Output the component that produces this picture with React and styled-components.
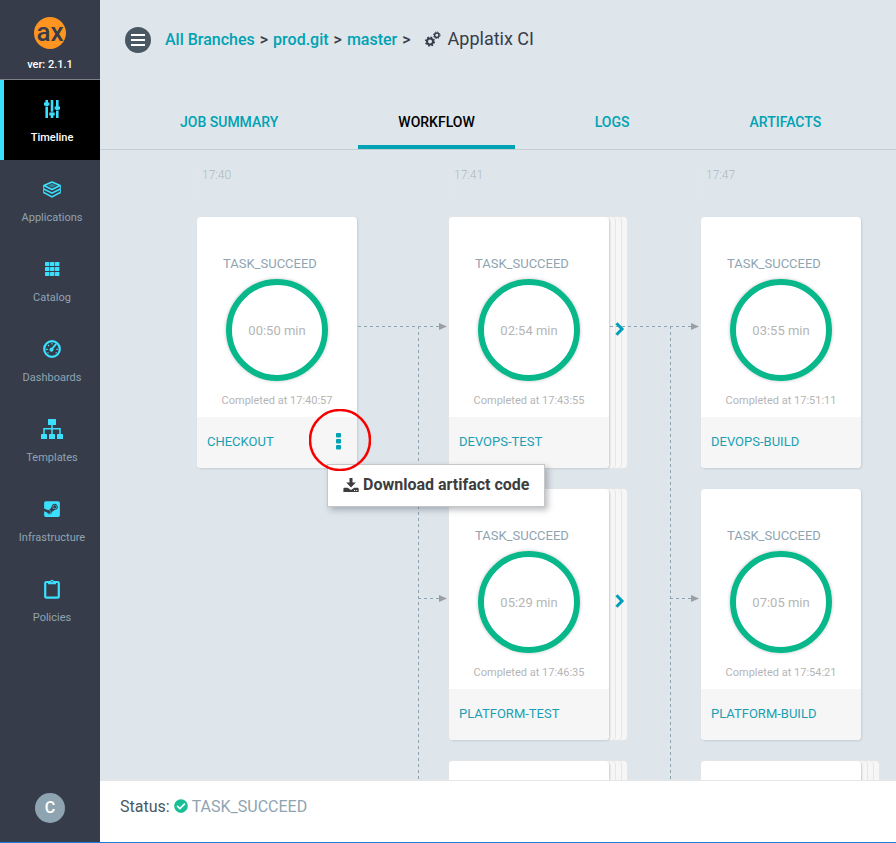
import React from "react";
import styled, { createGlobalStyle, css } from "styled-components";
import { FaCheckCircle, FaSteamSquare } from "react-icons/fa";

const teal = "#00a2b3";
const slate = "#8fa4b1";
const cyan = "#3be0ff";

const GlobalStyle = createGlobalStyle`
  * { box-sizing: border-box; }
  body {
    margin: 0;
    font-family: Roboto, "Liberation Sans", sans-serif;
    font-size: 16px;
    color: #495763;
  }
  button { font: inherit; border: 0; padding: 0; background: none; cursor: pointer; }
  a { text-decoration: none; }
  svg { display: block; }
`;

const Shell = styled.div`
  display: grid;
  grid-template-columns: 100px minmax(0, 1fr);
  height: 100vh;
  border-bottom: 1px solid #1c7ed6;
  background: #dee5eb;
`;

const Sidebar = styled.nav`
  display: flex;
  flex-direction: column;
  background: #363c4a;
`;

const Brand = styled.div`
  display: flex;
  flex-direction: column;
  align-items: center;
  gap: 8px;
  height: 80px;
  padding-top: 17px;
  border-bottom: 1px solid #7d8087;
  color: #fff;
  font-size: 11px;
  font-weight: 500;
  line-height: 16px;
`;

const NavItem = styled.a`
  display: flex;
  flex-direction: column;
  align-items: center;
  gap: 10px;
  height: 80px;
  padding-top: 19px;
  border-left: 4px solid ${(p) => (p.$active ? cyan : "transparent")};
  background: ${(p) => (p.$active ? "#000" : "transparent")};
  color: ${(p) => (p.$active ? "#fff" : slate)};
  font-size: 11px;
  font-weight: ${(p) => (p.$active ? 500 : 400)};
  line-height: 18px;
`;

const NavIcon = styled.span`
  display: flex;
  align-items: center;
  height: 20px;
  color: ${cyan};
`;

const Avatar = styled.button`
  width: 30px;
  height: 30px;
  margin: auto auto 19px;
  border-radius: 50%;
  background: ${slate};
  color: #fff;
  font-size: 16px;
  font-weight: 500;
  line-height: 28px;
`;

const Main = styled.main`
  display: flex;
  flex-direction: column;
  min-width: 0;
  min-height: 0;
`;

const Header = styled.header`
  display: flex;
  align-items: center;
  gap: 14px;
  height: 80px;
  padding-left: 25px;
`;

const MenuButton = styled.button`
  display: grid;
  place-items: center;
  width: 26px;
  height: 26px;
  border-radius: 50%;
  background: #495763;
`;

const Breadcrumb = styled.nav`
  display: flex;
  gap: 5px;
  color: #363c4a;
  font-weight: 500;
  line-height: 20px;
`;

const Crumb = styled.a`
  color: ${teal};
`;

const PageTitle = styled.h1`
  display: flex;
  align-items: center;
  gap: 7px;
  margin: 0;
  padding-bottom: 2px;
  color: #363c4a;
  font-size: 18px;
  font-weight: 400;
  line-height: 20px;
`;

const Tabs = styled.div`
  display: flex;
  gap: 40px;
  height: 70px;
  padding: 18px 40px 0;
  border-bottom: 1px solid #c5cdd4;
`;

const Tab = styled.button`
  flex: none;
  padding: 0 40px;
  border-bottom: 4px solid ${(p) => (p.$active ? teal : "transparent")};
  color: ${(p) => (p.$active ? "#000" : teal)};
  font-size: 14px;
  font-weight: 500;
  line-height: 20px;
  white-space: nowrap;
`;

const Board = styled.section`
  position: relative;
  display: flex;
  gap: 92px;
  flex: 1;
  min-height: 0;
  padding: 15px 0 0 97px;
  overflow: hidden;
`;

const Column = styled.div`
  display: flex;
  flex: none;
  flex-direction: column;
  width: 160px;
`;

const Time = styled.time`
  flex: none;
  height: 41px;
  margin-bottom: 11px;
  padding-left: 4px;
  border-left: 1px solid #e4e6e8;
  color: #adb9c2;
  font-size: 12px;
  font-weight: 300;
  line-height: 20px;
`;

const StepSlot = styled.div`
  position: relative;
  flex: none;
  height: 251px;
  margin-bottom: 21px;
`;

const stackSheet = css`
  position: absolute;
  top: 0;
  bottom: 0;
  left: 0;
  background: #f6f6f6;
  border-radius: 4px;
  box-shadow: 0 0 0 1px #e4e6e8;
`;

const Sheet = styled.div`
  ${stackSheet}
  right: ${(p) => -6 * p.$depth}px;
`;

const Card = styled.article`
  position: relative;
  display: flex;
  flex-direction: column;
  height: 100%;
  padding-top: 37px;
  border-radius: 4px;
  background: #fff;
  box-shadow: 1px 1px 2px #c3cdd5;
  overflow: hidden;
`;

const State = styled.div`
  padding-left: 26px;
  color: ${slate};
  font-size: 13px;
  line-height: 20px;
`;

const Ring = styled.div`
  display: grid;
  place-items: center;
  flex: none;
  width: 102px;
  height: 102px;
  margin: 5px auto 10px;
  border: 6px solid #08b78a;
  border-radius: 50%;
  box-shadow: 0 0 3px 1px #dcdcdc;
  color: #b5b5b5;
  font-size: 13px;
`;

const Completed = styled.div`
  color: #b5b5b5;
  font-size: 11px;
  line-height: 20px;
  text-align: center;
`;

const CardFooter = styled.footer`
  display: flex;
  align-items: center;
  justify-content: space-between;
  height: 51px;
  margin-top: auto;
  padding: 0 16px 2px 10px;
  background: #f6f6f6;
`;

const StepLink = styled.a`
  color: #1a9fb4;
  font-size: 13px;
`;

const KebabButton = styled.button`
  color: ${teal};
`;

const ExpandButton = styled.button`
  position: absolute;
  right: -17px;
  top: 104px;
  z-index: 3;
`;

const Links = styled.svg`
  position: absolute;
  left: 0;
  top: 0;
  pointer-events: none;
`;

const ActionMenu = styled.div`
  position: absolute;
  left: 130px;
  top: 247px;
  z-index: 4;
  padding: 10px 15px 11px;
  border: 1px solid #c6c6c6;
  background: #fff;
  box-shadow: 3px 3px 6px rgba(60, 70, 80, 0.35);
`;

const ActionItem = styled.button`
  display: flex;
  align-items: center;
  gap: 4px;
  color: #3d3d3d;
  font-weight: 700;
  line-height: 20px;
  white-space: nowrap;
`;

const Highlight = styled.svg`
  position: absolute;
  left: 112px;
  top: 192px;
  z-index: 5;
  pointer-events: none;
`;

const StatusBar = styled.footer`
  display: flex;
  align-items: flex-start;
  gap: 4px;
  height: 62px;
  padding: 15px 20px;
  border-top: 1px solid #e4e6e8;
  background: #fff;
  line-height: 22px;
`;

const StatusIcon = styled.span`
  padding-top: 3px;
  color: #18be94;
`;

const StatusValue = styled.span`
  color: ${slate};
`;

const Logo = () => (
  <svg width="32" height="32" viewBox="0 0 32 32" role="img" aria-label="ax">
    <circle cx="16" cy="16" r="16" fill="#ff9420" />
    <text x="16" y="24" textAnchor="middle" fontFamily="Roboto, sans-serif" fontSize="26" fontWeight="500" fill="#363c4a">ax</text>
  </svg>
);

const SlidersIcon = () => (
  <svg width="16" height="18" viewBox="0 0 16 18" fill="none" stroke="currentColor">
    <path d="M2.700 0v18M8 0v18M13.300 0v18" strokeWidth="2.600" />
    <path d="M0 4h5.400M5.300 14h5.400M10.600 8H16" strokeWidth="3" />
    <path d="M2.700 6v1M8 11.500v1M13.300 10v1" stroke="#000" strokeWidth="2.600" opacity=".6" />
  </svg>
);

const LayersIcon = () => (
  <svg width="18" height="17" viewBox="0 0 18 17">
    <path d="M9 1 17 4.500 9 8.500 1 4.500Z" fill="none" stroke="currentColor" strokeWidth="1.700" strokeLinejoin="round" />
    <path d="M5 4.500 9 2.800l4 1.700-4 2Z" fill="currentColor" opacity="0.45" />
    <path d="M1 7.200 9 11.300l8-4.100v1.700L9 13 1 8.900ZM1 10.800 9 14.900l8-4.100v1.600L9 16.800l-8-4.400Z" fill="currentColor" />
    <path d="M.7 4.500v8M17.300 4.500v8" stroke="currentColor" />
  </svg>
);

const GridIcon = () => (
  <svg width="15" height="14" viewBox="0 0 15 14" fill="currentColor">
    {[0, 5, 10].map((y) => [0, 5, 10].map((x) => <rect key={`${x}-${y}`} x={x} y={y} width="4.4" height="4" rx=".4" />))}
  </svg>
);

const GaugeIcon = () => (
  <svg width="18" height="18" viewBox="0 0 18 18" fill="none" stroke="currentColor">
    <circle cx="9" cy="9" r="7.800" strokeWidth="2.200" />
    <path d="m8.600 9.400 4.200-5" strokeWidth="1.800" strokeLinecap="round" />
    <circle cx="8.500" cy="9.700" r="1.600" fill="currentColor" />
    <path d="M9 3v1.600M5 5l1.100 1.100M3 9.400h1.800M13.400 9.400H15M5.500 13l-1-.5M12.700 13l1-.5" strokeWidth="1.100" />
  </svg>
);

const SitemapIcon = () => (
  <svg width="22" height="20" viewBox="0 0 22 20" fill="currentColor">
    <rect x="7" y="0" width="8" height="6" rx=".5" />
    <rect x="0" y="15" width="6" height="5" rx=".5" />
    <rect x="8" y="15" width="6" height="5" rx=".5" />
    <rect x="16" y="15" width="6" height="5" rx=".5" />
    <path d="M3 15v-5.300h16V15M11 6v9" fill="none" stroke="currentColor" strokeWidth="1.500" />
  </svg>
);

const ClipboardIcon = () => (
  <svg width="16" height="20" viewBox="0 0 16 20" fill="none" stroke="currentColor">
    <rect x="1.200" y="3" width="13.600" height="15.600" rx="1.200" strokeWidth="2.200" />
    <path d="M4 5.200V2.600h2.200a1.800 1.800 0 0 1 3.600 0H12v2.600Z" fill="currentColor" stroke="none" />
    <circle cx="8" cy="2.700" r=".7" fill="#363c4a" stroke="none" />
  </svg>
);

const GearsIcon = () => (
  <svg width="16" height="16" viewBox="0 0 16 16" fill="none" stroke="currentColor">
    <circle cx="5" cy="10.500" r="3" strokeWidth="2" />
    <circle cx="5" cy="10.500" r="4.400" strokeWidth="1.400" strokeDasharray="1.730 1.726" />
    <circle cx="11.800" cy="4.200" r="2.200" strokeWidth="1.500" />
    <circle cx="11.800" cy="4.200" r="3.300" strokeWidth="1" strokeDasharray="1.300 1.292" />
  </svg>
);

const BarsIcon = () => (
  <svg width="14" height="12" viewBox="0 0 14 12" fill="#fff">
    <path d="M0 0h14v2H0zM0 5h14v2H0zM0 10h14v2H0z" />
  </svg>
);

const KebabIcon = () => (
  <svg width="5" height="17" viewBox="0 0 5 17" fill="currentColor">
    <rect width="5" height="4.400" rx="1" />
    <rect y="6" width="5" height="4.400" rx="1" />
    <rect y="12" width="5" height="4.400" rx="1" />
  </svg>
);

const ChevronIcon = () => (
  <svg width="13" height="16" viewBox="0 0 13 16" fill="none" stroke="#009fb8" strokeWidth="3">
    <path d="m3.500 2.200 5.500 5.800-5.500 5.800" />
  </svg>
);

const DownloadIcon = () => (
  <svg width="16" height="15" viewBox="0 0 16 15" fill="currentColor">
    <path d="M6.500 0h3v4.500h3.300L8 9.500l-4.800-5h3.300z" />
    <path fillRule="evenodd" d="M1.200 9.700h3.500L8 12l3.300-2.300h3.500l.9.900v3.300H.4v-3.300ZM11 12v.9h1V12Zm2.200 0v.9h1V12Z" />
  </svg>
);

const navItems = [
  { label: "Timeline", icon: <SlidersIcon />, active: true },
  { label: "Applications", icon: <LayersIcon /> },
  { label: "Catalog", icon: <GridIcon /> },
  { label: "Dashboards", icon: <GaugeIcon /> },
  { label: "Templates", icon: <SitemapIcon /> },
  { label: "Infrastructure", icon: <FaSteamSquare size={18} /> },
  { label: "Policies", icon: <ClipboardIcon /> },
];

const tabs = ["JOB SUMMARY", "WORKFLOW", "LOGS", "ARTIFACTS"];

const columns = [
  {
    time: "17:40",
    steps: [{ name: "CHECKOUT", duration: "00:50 min", done: "17:40:57", menu: true }],
  },
  {
    time: "17:41",
    steps: [
      { name: "DEVOPS-TEST", duration: "02:54 min", done: "17:43:55", stacked: true },
      { name: "PLATFORM-TEST", duration: "05:29 min", done: "17:46:35", stacked: true },
      { stacked: true },
    ],
  },
  {
    time: "17:47",
    steps: [
      { name: "DEVOPS-BUILD", duration: "03:55 min", done: "17:51:11" },
      { name: "PLATFORM-BUILD", duration: "07:05 min", done: "17:54:21" },
      { stacked: true },
    ],
  },
];

function Step({ step }) {
  return (
    <StepSlot>
      {step.stacked && [3, 2, 1].map((depth) => <Sheet key={depth} $depth={depth} />)}
      <Card>
        {step.name && (
          <>
            <State>TASK_SUCCEED</State>
            <Ring>{step.duration}</Ring>
            <Completed>Completed at {step.done}</Completed>
            <CardFooter>
              <StepLink href="#">{step.name}</StepLink>
              {step.menu && (
                <KebabButton aria-label="Step actions" aria-haspopup="menu" aria-expanded="true">
                  <KebabIcon />
                </KebabButton>
              )}
            </CardFooter>
          </>
        )}
      </Card>
      {step.stacked && step.name && (
        <ExpandButton aria-label={`Expand ${step.name}`}>
          <ChevronIcon />
        </ExpandButton>
      )}
      {step.menu && (
        <>
          <ActionMenu role="menu">
            <ActionItem role="menuitem">
              <DownloadIcon />
              Download artifact code
            </ActionItem>
          </ActionMenu>
          <Highlight width="62" height="62" viewBox="0 0 62 62" aria-hidden="true">
            <circle cx="31" cy="31" r="30" fill="none" stroke="#f80000" strokeWidth="2.500" />
          </Highlight>
        </>
      )}
    </StepSlot>
  );
}

function Connectors() {
  return (
    <Links width="800" height="900" aria-hidden="true">
      {[258, 510].map((x) => (
        <g key={x}>
          <path
            d={`M${x} 176.5h82M${x + 60.5} 176v724M${x + 60} 448.5h22`}
            fill="none"
            stroke="#8fa4b1"
            strokeDasharray="3 3"
          />
          {[176, 448].map((y) => (
            <path key={y} d={`M${x + 81} ${y - 3}v7l8-3.5z`} fill="#9b9fa3" />
          ))}
        </g>
      ))}
    </Links>
  );
}

export default function App() {
  return (
    <>
      <GlobalStyle />
      <Shell>
        <Sidebar aria-label="Main">
          <Brand>
            <Logo />
            <span>ver: 2.1.1</span>
          </Brand>
          {navItems.map(({ label, icon, active }) => (
            <NavItem key={label} href="#" $active={active} aria-current={active ? "page" : undefined}>
              <NavIcon>{icon}</NavIcon>
              {label}
            </NavItem>
          ))}
          <Avatar>C</Avatar>
        </Sidebar>
        <Main>
          <Header>
            <MenuButton aria-label="Menu">
              <BarsIcon />
            </MenuButton>
            <Breadcrumb aria-label="Breadcrumb">
              <Crumb href="#">All Branches</Crumb>
              <span>&gt;</span>
              <Crumb href="#">prod.git</Crumb>
              <span>&gt;</span>
              <Crumb href="#">master</Crumb>
              <span>&gt;</span>
            </Breadcrumb>
            <PageTitle>
              <GearsIcon />
              Applatix CI
            </PageTitle>
          </Header>
          <Tabs role="tablist">
            {tabs.map((tab) => (
              <Tab key={tab} role="tab" aria-selected={tab === "WORKFLOW"} $active={tab === "WORKFLOW"}>
                {tab}
              </Tab>
            ))}
          </Tabs>
          <Board>
            {columns.map((column) => (
              <Column key={column.time}>
                <Time>{column.time}</Time>
                {column.steps.map((step, i) => (
                  <Step key={i} step={step} />
                ))}
              </Column>
            ))}
            <Connectors />
          </Board>
          <StatusBar>
            <span>Status:</span>
            <StatusIcon>
              <FaCheckCircle size={14} />
            </StatusIcon>
            <StatusValue>TASK_SUCCEED</StatusValue>
          </StatusBar>
        </Main>
      </Shell>
    </>
  );
}
